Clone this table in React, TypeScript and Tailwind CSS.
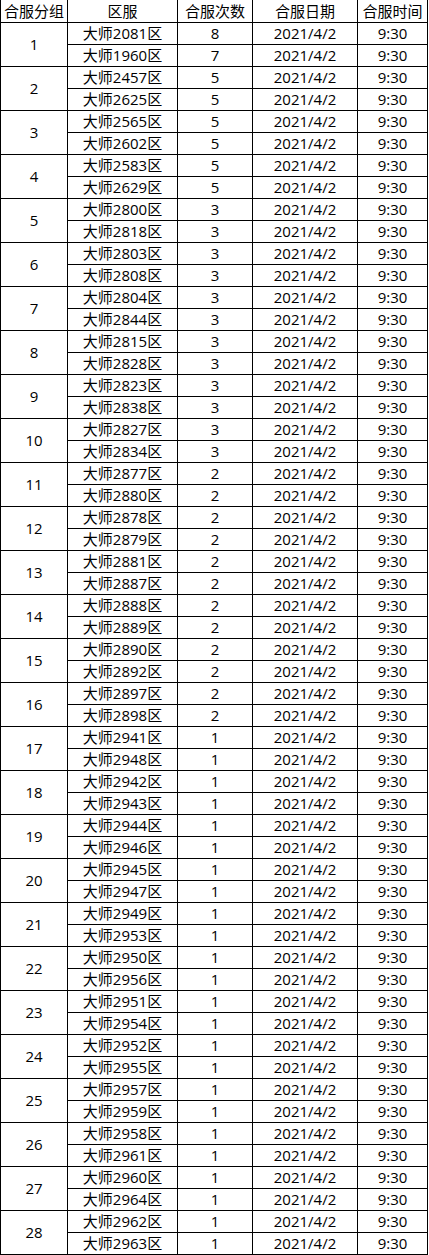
const groups: [string, number, string, number][] = [
  ["2081", 8, "1960", 7],
  ["2457", 5, "2625", 5],
  ["2565", 5, "2602", 5],
  ["2583", 5, "2629", 5],
  ["2800", 3, "2818", 3],
  ["2803", 3, "2808", 3],
  ["2804", 3, "2844", 3],
  ["2815", 3, "2828", 3],
  ["2823", 3, "2838", 3],
  ["2827", 3, "2834", 3],
  ["2877", 2, "2880", 2],
  ["2878", 2, "2879", 2],
  ["2881", 2, "2887", 2],
  ["2888", 2, "2889", 2],
  ["2890", 2, "2892", 2],
  ["2897", 2, "2898", 2],
  ["2941", 1, "2948", 1],
  ["2942", 1, "2943", 1],
  ["2944", 1, "2946", 1],
  ["2945", 1, "2947", 1],
  ["2949", 1, "2953", 1],
  ["2950", 1, "2956", 1],
  ["2951", 1, "2954", 1],
  ["2952", 1, "2955", 1],
  ["2957", 1, "2959", 1],
  ["2958", 1, "2961", 1],
  ["2960", 1, "2964", 1],
  ["2962", 1, "2963", 1],
];

const cell = "border border-black p-0 h-[22px] text-center align-middle leading-[20px]";

export default function App() {
  return (
    <main
      className="min-h-screen bg-white text-black text-[15px]"
      style={{ fontFamily: '"Open Sans", "Noto Sans CJK SC", sans-serif' }}
    >
      <table className="border-collapse table-fixed w-[427px]">
        <colgroup>
          <col className="w-[67px]" />
          <col className="w-[110px]" />
          <col className="w-[75px]" />
          <col className="w-[105px]" />
          <col className="w-[70px]" />
        </colgroup>
        <thead>
          <tr>
            <th className={`${cell} border-t-0 font-normal`}>合服分组</th>
            <th className={`${cell} border-t-0 font-normal`}>区服</th>
            <th className={`${cell} border-t-0 font-normal`}>合服次数</th>
            <th className={`${cell} border-t-0 font-normal`}>合服日期</th>
            <th className={`${cell} border-t-0 font-normal`}>合服时间</th>
          </tr>
        </thead>
        <tbody>
          {groups.map(([a, ac, b, bc], i) => [
            <tr key={`${i}-a`}>
              <td rowSpan={2} className={cell}>
                {i + 1}
              </td>
              <td className={cell}>大师{a}区</td>
              <td className={cell}>{ac}</td>
              <td className={cell}>2021/4/2</td>
              <td className={cell}>9:30</td>
            </tr>,
            <tr key={`${i}-b`}>
              <td className={cell}>大师{b}区</td>
              <td className={cell}>{bc}</td>
              <td className={cell}>2021/4/2</td>
              <td className={cell}>9:30</td>
            </tr>,
          ])}
        </tbody>
      </table>
    </main>
  );
}
